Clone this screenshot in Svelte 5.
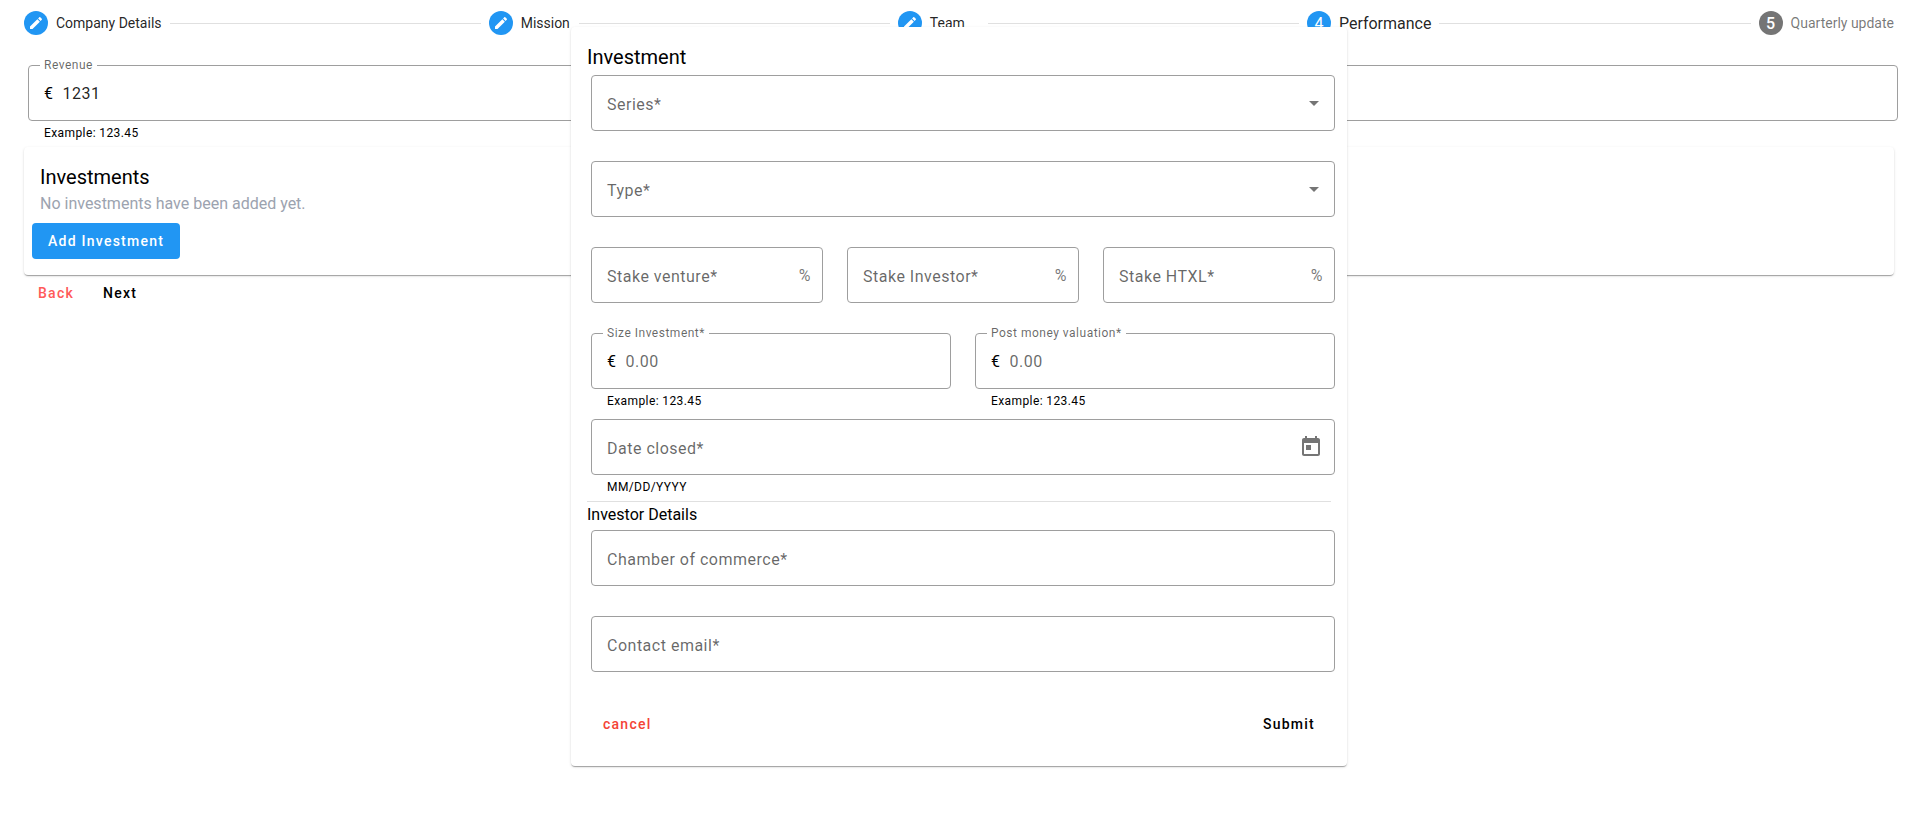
<script>
  const steps = [
    { n: 1, label: 'Company Details', state: 'done' },
    { n: 2, label: 'Mission', state: 'done' },
    { n: 3, label: 'Team', state: 'done' },
    { n: 4, label: 'Performance', state: 'active' },
    { n: 5, label: 'Quarterly update', state: 'todo' }
  ];
  const selects = [
    { id: 'series', label: 'Series*' },
    { id: 'type', label: 'Type*' }
  ];
  const stakes = [
    { id: 'stake-venture', label: 'Stake venture*' },
    { id: 'stake-investor', label: 'Stake Investor*' },
    { id: 'stake-htxl', label: 'Stake HTXL*' }
  ];
  const amounts = [
    { id: 'size', label: 'Size Investment*' },
    { id: 'valuation', label: 'Post money valuation*' }
  ];
  const contacts = [
    { id: 'chamber', label: 'Chamber of commerce*', type: 'text' },
    { id: 'email', label: 'Contact email*', type: 'email' }
  ];
  let revenue = $state('1231');
</script>

<main class="page">
  <nav class="stepper" aria-label="Steps">
    {#each steps as step, i}
      {#if i > 0}<span class="line"></span>{/if}
      <button type="button" class="step {step.state}">
        <span class="badge">
          {#if step.state === 'done'}
            <svg viewBox="0 0 24 24" width="16" height="16" aria-hidden="true"><path d="M3 17.25V21h3.75L17.81 9.94l-3.75-3.75L3 17.25zM20.71 7.04c.39-.39.39-1.02 0-1.41l-2.34-2.34c-.39-.39-1.02-.39-1.41 0l-1.83 1.83 3.75 3.75 1.83-1.83z" /></svg>
          {:else}
            {step.n}
          {/if}
        </span>
        <span class="step-label">{step.label}</span>
      </button>
    {/each}
  </nav>

  <div class="field raised">
    <div class="box">
      <label for="revenue">Revenue</label>
      <span class="prefix">€</span>
      <input id="revenue" type="text" bind:value={revenue} />
    </div>
    <p class="helper">Example: 123.45</p>
  </div>

  <section class="card">
    <h2>Investments</h2>
    <p class="empty">No investments have been added yet.</p>
    <button type="button" class="btn filled">Add Investment</button>
  </section>

  <div class="actions">
    <button type="button" class="btn back">Back</button>
    <button type="button" class="btn">Next</button>
  </div>
</main>

<div class="overlay">
  <form class="dialog" aria-labelledby="dialog-title">
    <h2 id="dialog-title">Investment</h2>
    {#each selects as f}
      <div class="field">
        <div class="box">
          <label for={f.id}>{f.label}</label>
          <select id={f.id}></select>
          <svg class="arrow" viewBox="0 0 24 24" width="24" height="24" aria-hidden="true"><path d="M7 10l5 5 5-5z" /></svg>
        </div>
      </div>
    {/each}

    <div class="row">
      {#each stakes as f}
        <div class="field">
          <div class="box">
            <label for={f.id}>{f.label}</label>
            <input id={f.id} type="text" />
            <span class="suffix">%</span>
          </div>
        </div>
      {/each}
    </div>

    <div class="row">
      {#each amounts as f}
        <div class="field raised">
          <div class="box">
            <label for={f.id}>{f.label}</label>
            <span class="prefix">€</span>
            <input id={f.id} type="text" placeholder="0.00" />
          </div>
          <p class="helper">Example: 123.45</p>
        </div>
      {/each}
    </div>

    <div class="field">
      <div class="box">
        <label for="date">Date closed*</label>
        <input id="date" type="text" />
        <button type="button" class="icon-btn" aria-label="Open calendar">
          <svg viewBox="0 0 24 24" width="24" height="24" aria-hidden="true"><path d="M19 3h-1V1h-2v2H8V1H6v2H5c-1.11 0-1.99.9-1.99 2L3 19c0 1.1.89 2 2 2h14c1.1 0 2-.9 2-2V5c0-1.1-.9-2-2-2zm0 16H5V8h14v11zM7 10h5v5H7z" /></svg>
        </button>
      </div>
      <p class="helper">MM/DD/YYYY</p>
    </div>

    <hr />
    <h3>Investor Details</h3>
    {#each contacts as f}
      <div class="field">
        <div class="box">
          <label for={f.id}>{f.label}</label>
          <input id={f.id} type={f.type} />
        </div>
      </div>
    {/each}

    <div class="dialog-actions">
      <button type="button" class="btn cancel">cancel</button>
      <button type="submit" class="btn">Submit</button>
    </div>
  </form>
</div>

<style>
  :global(body) {
    background: #fff;
    color: #000;
    font-family: Roboto, 'Liberation Sans', sans-serif;
    font-size: 16px;
  }
  h2,
  h3,
  p {
    margin: 0;
    font-weight: 400;
  }
  h2 {
    font-size: 20px;
    line-height: 28px;
  }
  h3 {
    font-size: 16px;
    line-height: 24px;
  }
  button,
  input,
  select {
    margin: 0;
    padding: 0;
    border: 0;
    background: none;
    font: inherit;
    color: inherit;
    outline: none;
  }
  button {
    cursor: pointer;
  }
  svg {
    display: block;
    fill: currentColor;
  }
  .page {
    padding: 11px 23px 0 24px;
  }

  .stepper {
    display: flex;
    align-items: center;
    gap: 8px;
    margin-bottom: 30px;
  }
  .step {
    display: flex;
    align-items: center;
    gap: 8px;
    height: 24px;
    font-size: 14px;
    white-space: nowrap;
    color: rgba(0, 0, 0, 0.87);
  }
  .step-label {
    min-width: 50px;
    text-align: left;
  }
  .badge {
    display: flex;
    align-items: center;
    justify-content: center;
    width: 24px;
    height: 24px;
    border-radius: 50%;
    background: #2196f3;
    color: #fff;
    font-size: 16px;
  }
  .active {
    font-size: 16px;
  }
  .todo {
    color: rgba(0, 0, 0, 0.54);
  }
  .todo .badge {
    background: #757575;
    font-weight: 500;
  }
  .line {
    flex: 1;
    border-top: 1px solid rgba(0, 0, 0, 0.12);
  }

  .field {
    min-height: 86px;
    margin: 0 -4px 0 4px;
  }
  .box {
    position: relative;
    display: flex;
    align-items: center;
    box-sizing: border-box;
    height: 56px;
    padding: 0 11px 0 15px;
    border: 1px solid #9e9e9e;
    border-radius: 4px;
    letter-spacing: 0.03125em;
  }
  .box input,
  .box select {
    flex: 1;
    min-width: 0;
    height: 24px;
    letter-spacing: inherit;
    color: rgba(0, 0, 0, 0.87);
  }
  .box select {
    appearance: none;
  }
  input::placeholder {
    color: rgba(0, 0, 0, 0.6);
    opacity: 1;
  }
  label {
    position: absolute;
    top: 18px;
    left: 15px;
    line-height: 22px;
    color: rgba(0, 0, 0, 0.6);
    white-space: nowrap;
    pointer-events: none;
  }
  .raised label {
    top: -10px;
    left: 11px;
    padding: 0 4px;
    background: #fff;
    font-size: 12px;
    line-height: 18px;
  }
  .prefix {
    margin-right: 9px;
  }
  .suffix,
  .arrow,
  .icon-btn {
    color: rgba(0, 0, 0, 0.54);
  }
  .arrow {
    margin-right: -3px;
    pointer-events: none;
  }
  .helper {
    padding: 2px 16px 0;
    font-size: 12px;
    line-height: 20px;
    letter-spacing: 0.0333em;
  }

  .card,
  .dialog {
    border-radius: 4px;
    background: #fff;
    box-shadow:
      0 2px 1px -1px rgba(0, 0, 0, 0.2),
      0 1px 1px 0 rgba(0, 0, 0, 0.14),
      0 1px 3px 0 rgba(0, 0, 0, 0.12);
  }
  .page .field {
    min-height: 82px;
  }
  .card {
    padding: 16px;
  }
  .empty {
    padding-top: 1px;
    line-height: 24px;
    color: #9ca3af;
  }
  .btn {
    height: 36px;
    padding: 0 8px;
    border-radius: 4px;
    font-size: 14px;
    font-weight: 500;
    letter-spacing: 0.0893em;
  }
  .filled {
    display: block;
    margin: 7px -8px 0;
    padding: 0 16px;
    background: #2196f3;
    color: #fff;
  }
  .actions {
    display: flex;
    gap: 13px;
    padding: 0 6px;
  }
  .back {
    color: #ff5a5a;
  }
  .cancel {
    color: #f44336;
  }

  .overlay {
    position: absolute;
    inset: 0;
    display: flex;
    align-items: flex-start;
    justify-content: center;
    padding: 27px 0 0 1px;
    pointer-events: none;
  }
  .dialog {
    box-sizing: border-box;
    width: 100%;
    max-width: 776px;
    padding: 16px 16px 24px;
    pointer-events: auto;
  }
  .dialog h2 {
    margin-bottom: 4px;
  }
  .row {
    display: flex;
    gap: 24px;
    margin: 0 -4px 0 4px;
  }
  .row .field {
    flex: 1;
    min-width: 0;
    margin: 0;
  }
  hr {
    margin: -4px 0 0;
    border: 0;
    border-top: 1px solid rgba(0, 0, 0, 0.12);
  }
  h3 {
    padding: 1px 0 3px;
  }
  .dialog-actions {
    display: flex;
    justify-content: space-between;
    padding: 4px 8px 0;
  }
</style>
